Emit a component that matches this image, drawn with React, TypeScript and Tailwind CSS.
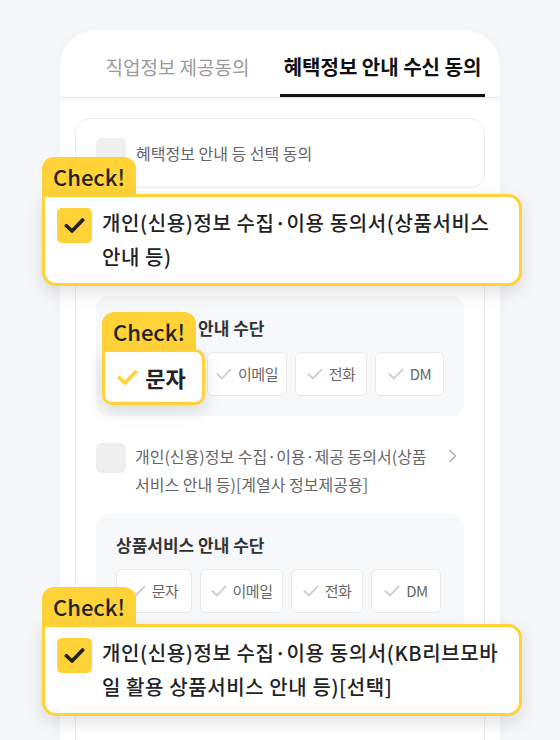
import type { ReactNode } from 'react'

const YELLOW = '#FFD338'

function CheckMark({ className, color, width = 3 }: { className?: string; color: string; width?: number }) {
  return (
    <svg viewBox="0 0 16 12" className={className} fill="none">
      <path d="M1.5 6.2 L6 10.4 L14.5 1.6" stroke={color} strokeWidth={width} strokeLinecap="round" strokeLinejoin="round" />
    </svg>
  )
}

function Chevron() {
  return (
    <svg viewBox="0 0 10 14" className="mt-[7px] mr-[6px] h-[14px] w-[10px] shrink-0" fill="none">
      <path d="M2 1.5 L7.5 7 L2 12.5" stroke="#b3b3b3" strokeWidth={1.6} strokeLinecap="round" strokeLinejoin="round" />
    </svg>
  )
}

function EmptyBox() {
  return <div className="h-[30px] w-[30px] shrink-0 rounded-[6px] bg-[#efefef]" />
}

function ChannelBox({ widths }: { widths: number[] }) {
  const labels = ['문자', '이메일', '전화', 'DM']
  return (
    <div className="rounded-[14px] bg-[#f7f8fa] p-[20px]">
      <div className="text-[17px] font-bold leading-[24px] text-[#333]">상품서비스 안내 수단</div>
      <div className="mt-[12px] flex gap-[8px]">
        {labels.map((label, i) => (
          <div
            key={label}
            style={{ width: widths[i] }}
            className="flex h-[44px] items-center justify-center gap-[6px] rounded-[6px] border border-[#e9e9e9] bg-white"
          >
            <CheckMark className="h-[12px] w-[16px]" color="#cfcfcf" width={2} />
            <span className="text-[15px] tracking-[-0.5px] text-[#666]">{label}</span>
          </div>
        ))}
      </div>
    </div>
  )
}

function Badge() {
  return (
    <div className="flex h-[37px] w-[94px] items-center justify-center rounded-t-[12px] bg-[#FFD338] pt-[1px] text-[22px] font-medium leading-none text-[#222]">
      Check!
    </div>
  )
}

function BigCallout({ top, children }: { top: number; children: ReactNode }) {
  return (
    <div className="absolute left-[42px] flex flex-col" style={{ top }}>
      <Badge />
      <div className="flex h-[92px] w-[480px] items-start gap-[10px] rounded-[14px] rounded-tl-none border-[3px] border-[#FFD338] bg-white pt-[9px] pl-[12px] shadow-[0_6px_18px_rgba(0,0,0,0.13)]">
        <div className="mt-[2px] flex h-[35px] w-[35px] shrink-0 items-center justify-center rounded-[5px] bg-[#FFD338]">
          <CheckMark className="h-[15px] w-[21px]" color="#222" width={3} />
        </div>
        <div className="whitespace-nowrap text-[20px] font-medium leading-[34px] tracking-[0.6px] text-[#222]">{children}</div>
      </div>
    </div>
  )
}

export default function App() {
  return (
    <div
      className="relative h-[740px] w-[560px] overflow-hidden bg-[#f6f7f9] font-['Noto_Sans_CJK_KR','Noto_Sans',sans-serif]"
    >
      <div className="mx-[60px] mt-[30px] h-[760px] rounded-t-[36px] bg-white shadow-[0_0_12px_rgba(0,0,0,0.03)]">
        {/* tabs */}
        <div className="flex px-[15px]">
          <div className="flex h-[67px] flex-1 items-center justify-center pt-[8px] text-[19px] text-[#9a9a9a]">
            직업정보 제공동의
          </div>
          <div className="flex h-[67px] flex-1 items-center justify-center border-b-[3px] border-[#111] pt-[10px] text-[20px] font-bold text-[#111]">
            혜택정보 안내 수신 동의
          </div>
        </div>
        <div className="h-px bg-[#e6e6e6]" />

        <div className="px-[15px] pt-[20px]">
          <div className="flex h-[70px] items-center gap-[10px] rounded-[14px] border border-[#ececec] px-[20px]">
            <EmptyBox />
            <span className="text-[16px] text-[#666]">혜택정보 안내 등 선택 동의</span>
          </div>

          <div className="mt-[17px] h-[600px] rounded-[14px] border border-[#ececec] px-[20px] pt-[19px]">
            <div className="flex items-start gap-[9px]">
              <div className="mt-[1px]">
                <EmptyBox />
              </div>
              <div className="flex-1 whitespace-nowrap text-[16px] leading-[28px] text-[#666]">
                개인(신용)정보 수집·이용 동의서(상품서비스
                <br />
                안내 등)
              </div>
            </div>
            <div className="mt-[15px]">
              <ChannelBox widths={[83, 80, 72, 69]} />
            </div>

            <div className="mt-[26px] flex items-start gap-[9px]">
              <div className="mt-[1px]">
                <EmptyBox />
              </div>
              <div className="flex-1 whitespace-nowrap text-[16px] leading-[28px] text-[#666]">
                개인(신용)정보 수집·이용·제공 동의서(상품
                <br />
                서비스 안내 등)[계열사 정보제공용]
              </div>
              <Chevron />
            </div>
            <div className="mt-[15px]">
              <ChannelBox widths={[76, 83, 72, 70]} />
            </div>

            <div className="mt-[26px] flex items-start gap-[9px]">
              <div className="mt-[1px]">
                <EmptyBox />
              </div>
              <div className="flex-1 whitespace-nowrap text-[16px] leading-[28px] text-[#666]">
                개인(신용)정보 수집·이용 동의서(KB리브모바
                <br />
                일 활용 상품서비스 안내 등)[선택]
              </div>
            </div>
          </div>
        </div>
      </div>

      {/* callouts */}
      <BigCallout top={157}>
        개인(신용)정보 수집·이용 동의서(상품서비스
        <br />
        안내 등)
      </BigCallout>

      <div className="absolute left-[102px] top-[312px] flex flex-col">
        <Badge />
        <div className="flex h-[56px] w-[103px] items-center justify-center gap-[7px] rounded-[10px] rounded-tl-none border-[3px] border-[#FFD338] bg-white pr-[4px] shadow-[0_6px_18px_rgba(0,0,0,0.13)]">
          <CheckMark className="h-[15px] w-[21px]" color={YELLOW} width={3} />
          <span className="text-[22px] font-bold leading-none text-[#222]">문자</span>
        </div>
      </div>

      <BigCallout top={587}>
        개인(신용)정보 수집·이용 동의서(KB리브모바
        <br />
        일 활용 상품서비스 안내 등)[선택]
      </BigCallout>
    </div>
  )
}
